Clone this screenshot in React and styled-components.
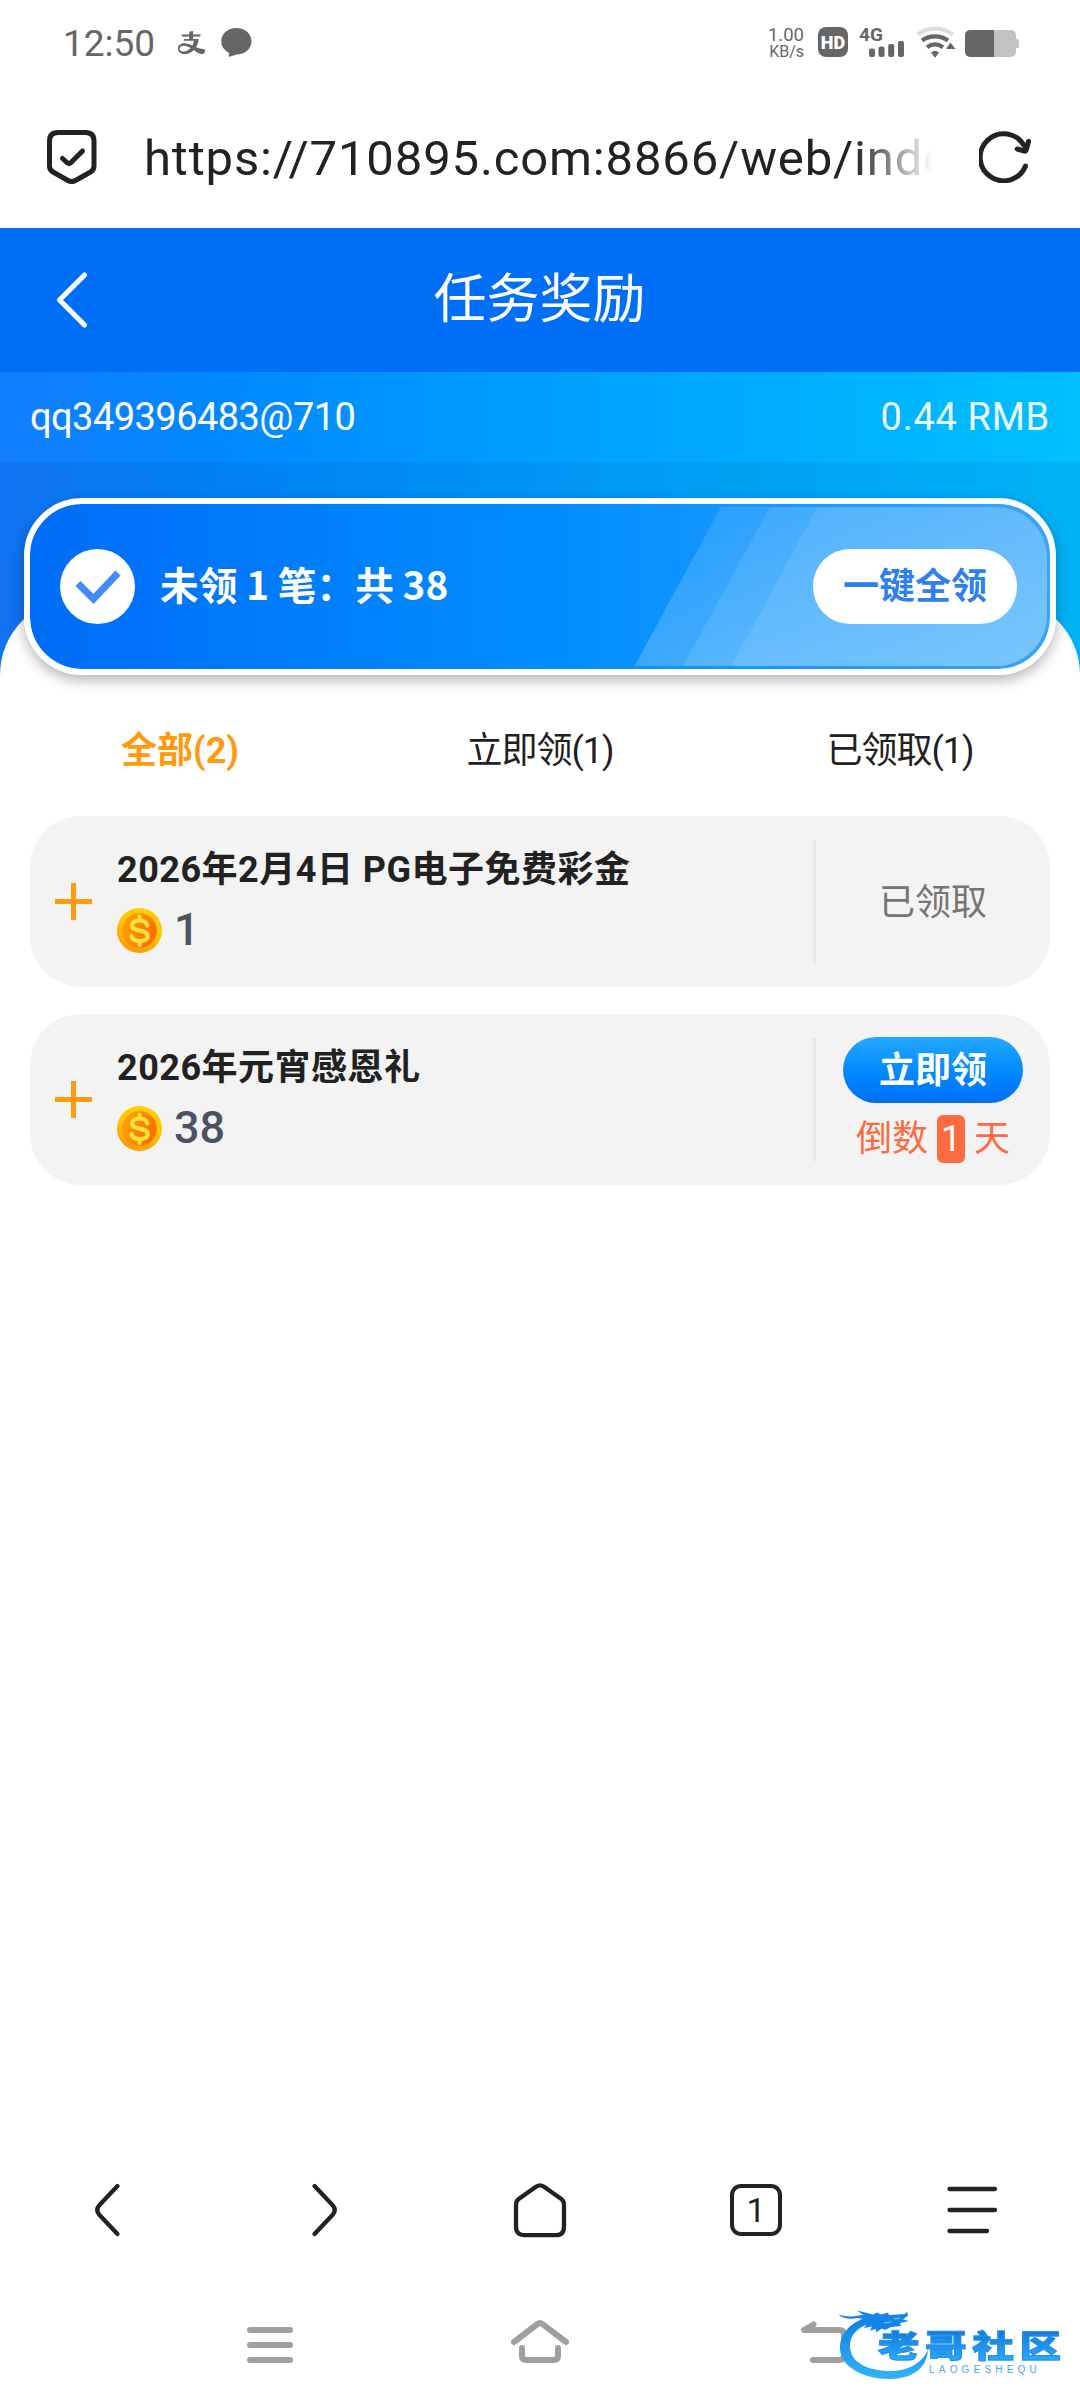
import React from "react";
import styled, { createGlobalStyle } from "styled-components";
import { AiOutlineAlipay } from "react-icons/ai";

const rewards = [
  { id: 1, title: "2026年2月4日 PG电子免费彩金", amount: 1, claimed: true },
  { id: 2, title: "2026年元宵感恩礼", amount: 38, claimed: false, days: 1 },
];

const tabs = [
  { label: "全部(2)", active: true },
  { label: "立即领(1)" },
  { label: "已领取(1)" },
];

const Coin = () => (
  <svg width="45" height="45" viewBox="0 0 45 45">
    <defs>
      <linearGradient id="coinRim" x1="0.7" y1="0" x2="0.3" y2="1">
        <stop offset="0" stopColor="#ffd000" />
        <stop offset="0.5" stopColor="#ffc400" />
        <stop offset="1" stopColor="#ff9408" />
      </linearGradient>
      <linearGradient id="coinFace" x1="0" y1="0.3" x2="1" y2="0.7">
        <stop offset="0" stopColor="#ffa000" />
        <stop offset="1" stopColor="#fb6a04" />
      </linearGradient>
    </defs>
    <circle cx="22.5" cy="22.5" r="22.5" fill="url(#coinRim)" />
    <circle cx="22.5" cy="22.5" r="17.3" fill="url(#coinFace)" />
    <path
      d="M30.300 17.500c-.600-3.200-3.800-5-7.800-5-4.300 0-7.400 1.800-7.400 4.900 0 7 15.600 3.500 15.600 10.700 0 3.200-3.500 5-8 5-4.400 0-7.700-1.800-8.300-5.200M22.500 8.500v4M22.500 33v4"
      fill="none"
      stroke="#ffe33e"
      strokeWidth="4.200"
      strokeLinecap="round"
    />
  </svg>
);

const StatusIcons = () => (
  <svg width="166" height="32" viewBox="856 26 166 32">
    <g fill="#666">
      <rect x="870" y="48.500" width="6" height="8.500" rx="2" />
      <rect x="879.500" y="46.500" width="6" height="10.500" rx="2" />
      <rect x="889.200" y="44" width="6" height="13" rx="2" />
      <rect x="899" y="41" width="6" height="16" rx="2" />
      <path d="M932.500 52.500q3.500-2.500 7 0l-3.500 4.700z" stroke="#666" />
      <path d="M951.500 42.500l5 6.500h-9.500z" />
    </g>
    <g fill="none" stroke="#666" strokeWidth="4.200">
      <path d="M923 40.500c8-5.400 18-5.400 26 0" />
      <path d="M928 47.300c5-3.600 11-3.600 16 0" />
      <path d="M918.500 34.500c11-8 24-8 35.500 0" stroke="#ddd" />
    </g>
    <path d="M995 30h17a5 5 0 0 1 5 5v17a5 5 0 0 1-5 5h-17z" fill="#c2c2c2" />
    <rect x="1016" y="39" width="4" height="9" rx="1.500" fill="#c2c2c2" />
    <path d="M971 30h24v27h-24a5 5 0 0 1-5-5v-17a5 5 0 0 1 5-5z" fill="#666" />
  </svg>
);

const Dragon = () => (
  <svg width="96" height="72" viewBox="836 2308 96 72">
    <defs>
      <linearGradient id="dragon" x1="0" y1="0" x2="0" y2="1">
        <stop offset="0" stopColor="#0f7fe6" />
        <stop offset="1" stopColor="#2fb2fa" />
      </linearGradient>
    </defs>
    <path
      d="M872 2316C850 2321 840 2334 840 2348C840 2366 862 2379 890 2379C912 2379 927 2368 928 2350C921 2364 908 2371 890 2371C867 2371 850 2362 850 2346C850 2334 859 2325 878 2321z"
      fill="url(#dragon)"
    />
    <g fill="#1485e8">
      <path d="M838 2314.500c9 2.500 15 2.500 24 .500l12 1.500-2 4-14-2.500c-8 1.500-15 .500-20-3.500z" />
      <path d="M857 2310.500l16 4 4-2 4 2 7-2 1 2.500 16-1 2-2.500 1 4-5 4 6 1.500-9 2 1 3-10 1-6 3-3-1.500-6 4v-3.500l-6 1.500 2-4-8 1.500 4-6-2-5z" />
    </g>
    <path d="M884 2323l7-1M894 2319l6-1" stroke="#8fc8f8" strokeWidth="1" />
  </svg>
);

const Reward = ({ reward }) => (
  <Card>
    <Expand>
      <svg width="37" height="37" viewBox="0 0 37 37" stroke="#ff9a11" strokeWidth="5">
        <path d="M18.500 0v37M0 18.500h37" />
      </svg>
    </Expand>
    <Info>
      <CardTitle>{reward.title}</CardTitle>
      <Amount>
        <Coin />
        <span>{reward.amount}</span>
      </Amount>
    </Info>
    <Action>
      {reward.claimed ? (
        <Claimed>已领取</Claimed>
      ) : (
        <>
          <ClaimButton>立即领</ClaimButton>
          <Countdown>
            倒数<Days>{reward.days}</Days>天
          </Countdown>
        </>
      )}
    </Action>
  </Card>
);

const App = () => {
  return (
    <Page>
      <GlobalStyle />
      <StatusBar>
        <Clock>12:50</Clock>
        <AiOutlineAlipay size={31} />
        <Bubble width="31" height="29" viewBox="0 0 31 29">
          <path d="M15.300 0C24 0 30.500 5.600 30.500 13.300S24 26.600 15.500 26.600l-7.700 2.400v-4.400C3 22.500.300 18.300.300 13.300.300 5.600 6.700 0 15.300 0z" fill="#666" />
        </Bubble>
        <Speed>
          <b>1.00</b>
          <small>KB/s</small>
        </Speed>
        <HdBadge>HD</HdBadge>
        <Network>
          <StatusIcons />
          <NetworkType>4G</NetworkType>
        </Network>
      </StatusBar>

      <AddressBar>
        <svg width="50" height="54" viewBox="47 130 50 54" fill="none" stroke="#222" strokeWidth="5" strokeLinecap="round" strokeLinejoin="round">
          <path d="M58 132.500h27.500q8.500 0 8.500 8.500v25q0 4-3.500 6l-15 8.500q-3.800 2-7.500 0l-15-8.500q-3.500-2-3.500-6v-25q0-8.500 8.500-8.500z" />
          <path d="M62.500 158.500l5 4.500q1.500 1 3 0l12-12" />
        </svg>
        <Url>https://710895.com:8866/web/inde</Url>
        <svg width="52" height="52" viewBox="980 130 52 52" fill="none" stroke="#222" strokeWidth="5" strokeLinecap="round" strokeLinejoin="round">
          <path d="M1026.500 165a23.500 23.500 0 1 1 -1.500-20.500" />
          <path d="M1029.500 140.500l-2.300 8.500q-.500 1.500-2 1l-7-2" />
        </svg>
      </AddressBar>

      <Header>
        <svg width="32" height="56" viewBox="0 0 32 56" fill="none" stroke="#fff" strokeWidth="5" strokeLinecap="round" strokeLinejoin="round">
          <path d="M28.500 3l-25 25 25 25" />
        </svg>
        <Title>任务奖励</Title>
      </Header>

      <Account>
        <Username>qq349396483@710</Username>
        <Balance>0.44 RMB</Balance>
      </Account>

      <Hero>
        <Summary>
          <Stripes width="1020" height="165" viewBox="30 504 1020 165">
            <defs>
              <linearGradient id="glow" x1="0" y1="0" x2="0" y2="1">
                <stop offset="0" stopColor="#cdeaff" stopOpacity="0.130" />
                <stop offset="1" stopColor="#cdeaff" stopOpacity="0.260" />
              </linearGradient>
              <linearGradient id="glowSoft" x1="0" y1="0" x2="0" y2="1">
                <stop offset="0" stopColor="#c4ebff" stopOpacity="0.110" />
                <stop offset="1" stopColor="#c4ebff" stopOpacity="0.150" />
              </linearGradient>
            </defs>
            <path d="M720.800 507H996a51 51 0 0 1 51 51v57a51 51 0 0 1-51 51H634.700z" fill="url(#glow)" />
            <path d="M770 507H996a51 51 0 0 1 51 51v57a51 51 0 0 1-51 51H683z" fill="url(#glowSoft)" />
            <path d="M817.500 507H996a51 51 0 0 1 51 51v57a51 51 0 0 1-51 51H731.500z" fill="url(#glowSoft)" />
          </Stripes>
          <CheckCircle>
            <svg width="46" height="36" viewBox="0 0 46 36" fill="none" stroke="#428af8" strokeWidth="7">
              <path d="M3 14.500l15.500 15.500L43 4" />
            </svg>
          </CheckCircle>
          <SummaryText>未领 1 笔：共 38</SummaryText>
          <ClaimAll>一键全领</ClaimAll>
        </Summary>
      </Hero>

      <Tabs>
        {tabs.map((tab) => (
          <Tab key={tab.label} $active={tab.active}>
            {tab.label}
          </Tab>
        ))}
      </Tabs>

      <List>
        {rewards.map((reward) => (
          <Reward key={reward.id} reward={reward} />
        ))}
      </List>

      {/* browser toolbar */}
      <Toolbar>
        <svg width="54" height="56" viewBox="0 0 54 56">
          <path d="M38 4L20 23q-4.500 5 0 10l18 19" transform="translate(-1.500)" />
        </svg>
        <svg width="54" height="56" viewBox="0 0 54 56">
          <path d="M16 4l18 19q4.500 5 0 10l-18 19" transform="translate(1.500)" />
        </svg>
        <svg width="54" height="56" viewBox="0 0 54 56">
          <path d="M23 4.700q4-2.700 8 0l17 12q3 2.200 3 6v22q0 8.500-8.500 8.500h-31q-8.500 0-8.500-8.500v-22q0-3.800 3-6z" />
        </svg>
        <TabCount>1</TabCount>
        <svg width="54" height="56" viewBox="0 0 54 56">
          <path d="M4.500 7h45.500M4.500 28h45.500M4.500 49h37.500" />
        </svg>
      </Toolbar>

      {/* system navigation */}
      <SystemNav>
        <svg width="60" height="48" viewBox="0 0 60 48">
          <path d="M10 12h40M10 27h40M10 42h40" />
        </svg>
        <svg width="60" height="48" viewBox="0 0 60 48">
          <path d="M4 24L27.500 6q2.500-2 5 0L56 24M12 30v8q0 4 4 4h28q4 0 4-4v-8" />
        </svg>
        <BackIcon width="60" height="48" viewBox="17 0 60 48">
          <path d="M33.500 6.500L24 12h35q5 0 5 5v20q0 5-5 5h-26" />
        </BackIcon>
      </SystemNav>

      <Watermark>
        <Dragon />
        <Brand>
          <BrandName>老哥社区</BrandName>
          <BrandLatin>LAOGESHEQU</BrandLatin>
        </Brand>
      </Watermark>
    </Page>
  );
};

export default App;

const GlobalStyle = createGlobalStyle`
  * {
    box-sizing: border-box;
  }
  body {
    margin: 0;
    background: #fff;
  }
  svg {
    display: block;
    flex: none;
  }
  button {
    font-family: inherit;
    border: none;
    padding: 0;
  }
`;

const Page = styled.div`
  position: relative;
  display: flex;
  flex-direction: column;
  width: 1080px;
  height: 2408px;
  overflow: hidden;
  background: #fff;
  color: #212121;
  font-family: Roboto, "Noto Sans CJK SC", sans-serif;
  white-space: nowrap;
`;

const StatusBar = styled.div`
  display: flex;
  align-items: center;
  height: 84px;
  padding: 0 59px 0 63px;
  color: #666;
  & > svg:nth-of-type(1) {
    margin-left: 21px;
  }
`;
const Clock = styled.span`
  font-size: 37px;
  line-height: 48px;
  padding-top: 4px;
`;
const Bubble = styled.svg`
  margin-left: 14px;
`;
const Speed = styled.div`
  display: flex;
  flex-direction: column;
  align-items: flex-end;
  width: 36px;
  margin-left: auto;
  b {
    font-size: 18.500px;
    font-weight: 400;
    line-height: 18px;
  }
  small {
    font-size: 16px;
    line-height: 15px;
  }
`;
const HdBadge = styled.span`
  width: 30px;
  height: 30px;
  margin: 0 7px 0 14px;
  border-radius: 8px;
  background: #666;
  color: #fff;
  font-size: 18px;
  font-weight: 900;
  line-height: 31px;
  text-align: center;
`;
const Network = styled.div`
  position: relative;
`;
const NetworkType = styled.span`
  position: absolute;
  left: 4px;
  top: -2px;
  font-size: 19px;
  font-weight: 700;
  line-height: 22px;
`;

const AddressBar = styled.div`
  display: flex;
  align-items: center;
  height: 144px;
  padding: 2px 48px 0 47px;
`;
const Url = styled.div`
  width: 792px;
  margin: 4px 44px 0 46px;
  padding-left: 1px;
  overflow: hidden;
  font-size: 49px;
  letter-spacing: 0.850px;
  line-height: 64px;
  color: #222;
  mask-image: linear-gradient(90deg, #000 710px, transparent 790px);
`;

const Header = styled.div`
  display: flex;
  align-items: center;
  height: 144px;
  padding: 0 56px;
  background: #006ff7;
  color: #fff;
`;
const Title = styled.h1`
  flex: 1;
  margin: 0 33px 0 0;
  font-size: 53px;
  font-weight: 400;
  line-height: 80px;
  text-align: center;
`;

const Account = styled.div`
  display: flex;
  align-items: center;
  justify-content: space-between;
  height: 90px;
  padding: 0 30px;
  background: linear-gradient(90deg, #127dff, #0088ff 20%, #00a2ff 55%, #00c0ff);
  color: #fff;
  font-size: 38px;
`;
const Username = styled.span`
  letter-spacing: -0.550px;
`;
const Balance = styled.span`
  color: #e8fbff;
  letter-spacing: 0.700px;
`;

/* the white sheet below rises over the blue area with rounded corners */
const Hero = styled.div`
  height: 213px;
  padding: 36px 24px 0;
  background: linear-gradient(90deg, #1172f2, #0080f4 20%, #0098f5 55%, #00b3f5);
  position: relative;
  &::before {
    content: "";
    position: absolute;
    left: 0;
    right: 0;
    bottom: 0;
    height: 77px;
    border-radius: 77px 77px 0 0;
    background: #fff;
  }
`;
const Summary = styled.div`
  position: relative;
  display: flex;
  align-items: center;
  height: 177px;
  padding: 0 33px 0 30px;
  border: 6px solid #fff;
  border-radius: 58px;
  background: linear-gradient(90deg, #006cf7, #008eff 52%, #38a5fa) padding-box;
  box-shadow: 0 5px 14px rgba(0, 0, 0, 0.3);
`;
const Stripes = styled.svg`
  position: absolute;
  left: 0;
  top: 0;
`;
const CheckCircle = styled.div`
  position: relative;
  display: flex;
  align-items: center;
  justify-content: center;
  width: 75px;
  height: 75px;
  border-radius: 50%;
  background: #fff;
`;
const SummaryText = styled.span`
  position: relative;
  margin-left: 25px;
  padding-bottom: 8px;
  color: #fff;
  font-family: "Noto Sans CJK SC", sans-serif;
  font-size: 38.700px;
  font-weight: 700;
  line-height: 56px;
`;
const ClaimAll = styled.button`
  position: relative;
  width: 204px;
  height: 75px;
  margin-left: auto;
  padding-bottom: 8px;
  border-radius: 37px;
  background: #fff;
  color: #2f80ed;
  font-size: 36px;
  font-weight: 700;
`;

const Tabs = styled.div`
  display: grid;
  grid-template-columns: repeat(3, 1fr);
  height: 141px;
  padding-top: 2px;
`;
const Tab = styled.div`
  display: flex;
  align-items: center;
  justify-content: center;
  color: ${(props) => (props.$active ? "#ff9a0e" : "#212121")};
  font-size: 36px;
  font-weight: ${(props) => (props.$active ? 700 : 400)};
  letter-spacing: ${(props) => (props.$active ? "0" : "-1px")};
`;

const List = styled.div`
  flex: 1;
  display: flex;
  flex-direction: column;
  gap: 27px;
  padding: 0 30px;
`;
const Card = styled.div`
  display: flex;
  align-items: center;
  height: 171px;
  border-radius: 51px;
  background: #f3f3f3;
`;
const Expand = styled.div`
  width: 87px;
  padding-left: 25px;
`;
const Info = styled.div`
  flex: 1;
  padding-bottom: 9px;
`;
const CardTitle = styled.div`
  margin-bottom: 10px;
  font-size: 36px;
  font-weight: 700;
  letter-spacing: 0.500px;
  line-height: 56px;
`;
const Amount = styled.div`
  display: flex;
  align-items: center;
  gap: 12px;
  height: 45px;
  color: #4b5260;
  font-size: 45px;
  font-weight: 500;
  line-height: 45px;
  span {
    padding-bottom: 2px;
  }
`;
const Action = styled.div`
  display: flex;
  flex-direction: column;
  align-items: center;
  justify-content: center;
  width: 237px;
  height: 123px;
  border-left: 3px solid #e6e6e6;
`;
const Claimed = styled.span`
  padding-bottom: 6px;
  color: #757575;
  font-size: 36px;
`;
const ClaimButton = styled.button`
  flex: none;
  width: 180px;
  height: 66px;
  margin-bottom: 12px;
  padding-bottom: 6px;
  border-radius: 33px;
  background: linear-gradient(#25a8ff, #0088ff 55%, #006ef6);
  color: #fff;
  font-size: 36px;
  font-weight: 700;
`;
const Countdown = styled.div`
  display: flex;
  align-items: center;
  color: #ff6b40;
  font-size: 36px;
  line-height: 48px;
`;
const Days = styled.span`
  width: 28px;
  height: 48px;
  margin: 0 9px;
  border-radius: 6px;
  background: #ff6b40;
  color: #fff;
  text-align: center;
`;

const Toolbar = styled.div`
  display: grid;
  grid-template-columns: repeat(5, 216px);
  justify-items: center;
  align-items: center;
  height: 120px;
  svg {
    fill: none;
    stroke: #222;
    stroke-width: 4.300;
    stroke-linecap: round;
    stroke-linejoin: round;
  }
`;
const TabCount = styled.div`
  width: 52px;
  height: 52px;
  border: 4px solid #222;
  border-radius: 11px;
  font-size: 34px;
  line-height: 45px;
  text-align: center;
`;

const SystemNav = styled.div`
  display: grid;
  grid-template-columns: repeat(3, 270px);
  justify-content: center;
  justify-items: center;
  height: 138px;
  padding-top: 48px;
  svg {
    fill: none;
    stroke: #9f9f9f;
    stroke-width: 6;
    stroke-linecap: round;
    stroke-linejoin: round;
  }
`;
const BackIcon = styled.svg`
  margin-left: 34px;
`;

const Watermark = styled.div`
  position: absolute;
  left: 836px;
  top: 2308px;
  display: flex;
`;
const Brand = styled.div`
  margin-left: -54px;
  padding-top: 23px;
`;
const BrandName = styled.div`
  width: 148px;
  transform: scaleX(1.330);
  transform-origin: left;
  background: linear-gradient(#1478da, #2eb0ff);
  background-clip: text;
  color: transparent;
  -webkit-text-stroke: 1px #2090ec;
  font-size: 31px;
  font-weight: 900;
  letter-spacing: 4.500px;
  line-height: 32px;
`;
const BrandLatin = styled.div`
  margin: 0 0 0 51px;
  color: #4aa8ec;
  font-family: "Liberation Sans", sans-serif;
  font-size: 10px;
  letter-spacing: 4.200px;
  line-height: 14px;
`;
